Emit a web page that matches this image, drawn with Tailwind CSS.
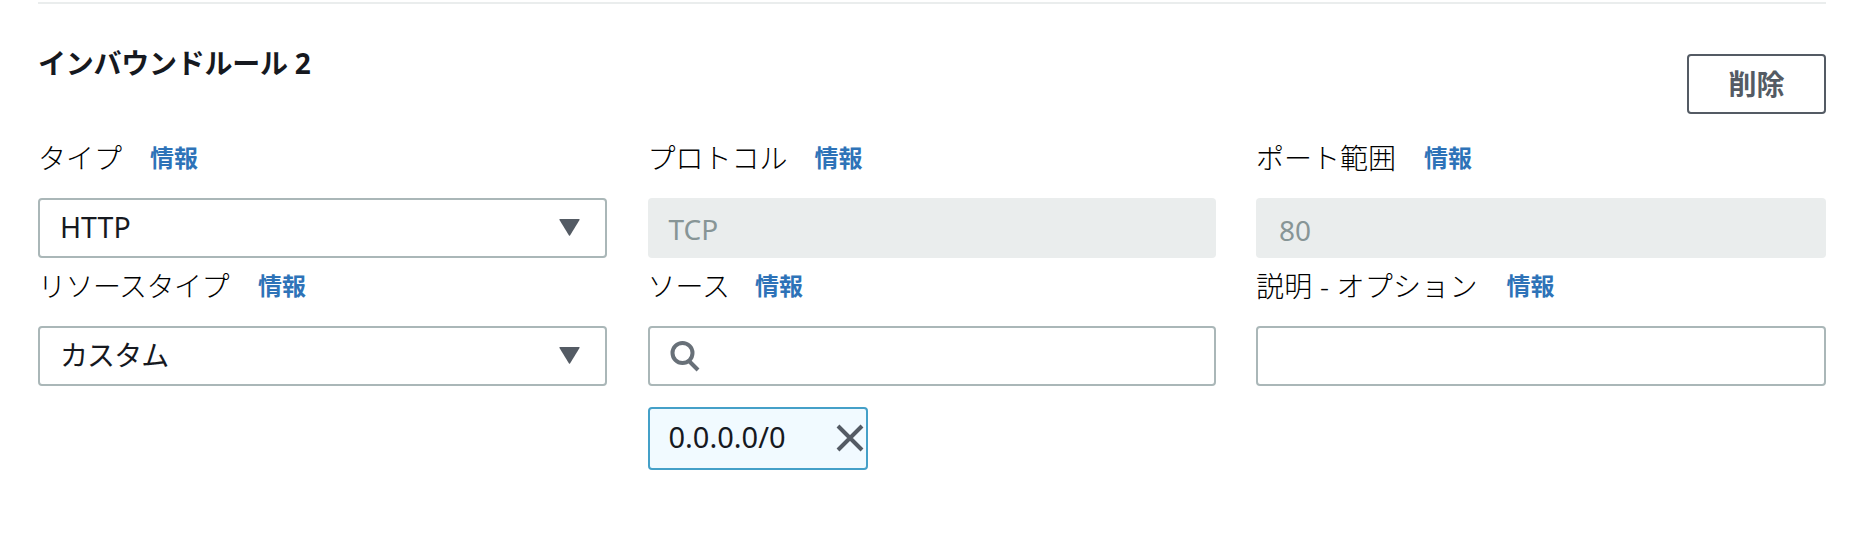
<!DOCTYPE html>
<html lang="ja">
<head>
<meta charset="utf-8">
<script src="https://cdn.jsdelivr.net/npm/@tailwindcss/browser@4"></script>
<title>インバウンドルール</title>
</head>
<body class="bg-white font-['Noto_Sans','Noto_Sans_CJK_JP',sans-serif] text-[#16191f]">
<div class="w-[1860px] h-[536px] overflow-hidden pl-[38px] pr-[34px] pt-[2px]">
    <div class="border-t-2 border-[#eaeded]"></div>

    <!-- Header -->
    <div class="flex justify-between items-start h-[126px] pt-[50px]">
        <h2 class="text-[28px] leading-[38px] font-bold -mt-[10px] tracking-[-0.25px]">インバウンドルール 2</h2>
        <button class="w-[139px] h-[60px] border-2 border-[#545b64] rounded-[4px] text-[#545b64] text-[28px] font-bold leading-none">削除</button>
    </div>

    <div class="grid grid-cols-[569px_568px_570px] justify-between">
        <!-- Row 1 -->
        <div>
            <div class="h-[68px] flex items-start gap-[28px] leading-[56px] text-[28px]">
                <span class="font-light text-black">タイプ</span>
                <a class="text-[24px] font-bold text-[#2e73b8]">情報</a>
            </div>
            <div class="h-[60px] border-2 border-[#aab7b8] rounded-[4px] flex items-center justify-between pl-[20px] pr-[25px] text-[28.500px]">
                <span class="-mt-[2px]">HTTP</span>
                <svg class="w-[21px] h-[17px] -mt-[1px]" viewBox="0 0 21 17"><path d="M1 0h19q1 0 .5 1L11 16.500q-.5.5-1 0L.5 1Q0 0 1 0z" fill="#545b64"/></svg>
            </div>
        </div>
        <div>
            <div class="h-[68px] flex items-start gap-[27px] leading-[56px] text-[28px]">
                <span class="font-light text-black">プロトコル</span>
                <a class="text-[24px] font-bold text-[#2e73b8]">情報</a>
            </div>
            <div class="h-[60px] bg-[#eaeded] rounded-[4px] flex items-center px-[21px] text-[28px] text-[#879596]"><span class="mt-[2px]">TCP</span></div>
        </div>
        <div>
            <div class="h-[68px] flex items-start gap-[28px] leading-[56px] text-[28px]">
                <span class="font-light text-black">ポート範囲</span>
                <a class="text-[24px] font-bold text-[#2e73b8]">情報</a>
            </div>
            <div class="h-[60px] bg-[#eaeded] rounded-[4px] flex items-center px-[23px] text-[28px] text-[#879596]"><span class="mt-[3px]">80</span></div>
        </div>

        <!-- Row 2 -->
        <div>
            <div class="h-[68px] flex items-start gap-[29px] leading-[56px] text-[28px]">
                <span class="font-light text-black tracking-[-0.5px]">リソースタイプ</span>
                <a class="text-[24px] font-bold text-[#2e73b8]">情報</a>
            </div>
            <div class="h-[60px] border-2 border-[#aab7b8] rounded-[4px] flex items-center justify-between pl-[20px] pr-[25px] text-[28px]">
                <span class="-mt-[2px] tracking-[-0.9px]">カスタム</span>
                <svg class="w-[21px] h-[17px] -mt-[1px]" viewBox="0 0 21 17"><path d="M1 0h19q1 0 .5 1L11 16.500q-.5.5-1 0L.5 1Q0 0 1 0z" fill="#545b64"/></svg>
            </div>
        </div>
        <div>
            <div class="h-[68px] flex items-start gap-[25px] leading-[56px] text-[28px]">
                <span class="font-light text-black">ソース</span>
                <a class="text-[24px] font-bold text-[#2e73b8]">情報</a>
            </div>
            <div class="h-[60px] border-2 border-[#aab7b8] rounded-[4px] flex items-center pl-[20px]">
                <svg class="w-[30px] h-[32px]" viewBox="0 0 30 32" fill="none" stroke="#687078" stroke-width="4"><circle cx="12.500" cy="13" r="10"/><path d="M19 21l9 9"/></svg>
            </div>
            <!-- Token -->
            <div class="mt-[21px] w-[220px] h-[63px] border-2 border-[#44a0c8] bg-[#f1faff] rounded-[4px] flex items-center justify-between pl-[19px] pr-[2px] text-[29px]">
                <span class="-mt-[4px]">0.0.0.0/0</span>
                <svg class="w-[28px] h-[28px] -mt-[1px]" viewBox="0 0 28 28" fill="none" stroke="#545b64" stroke-width="4"><path d="M2 2l24 24M26 2L2 26"/></svg>
            </div>
        </div>
        <div>
            <div class="h-[68px] flex items-start gap-[29px] leading-[56px] text-[28px]">
                <span class="font-light text-black tracking-[0.2px]">説明 - オプション</span>
                <a class="text-[24px] font-bold text-[#2e73b8]">情報</a>
            </div>
            <div class="h-[60px] border-2 border-[#aab7b8] rounded-[4px]"></div>
        </div>
    </div>
</div>
</body>
</html>
